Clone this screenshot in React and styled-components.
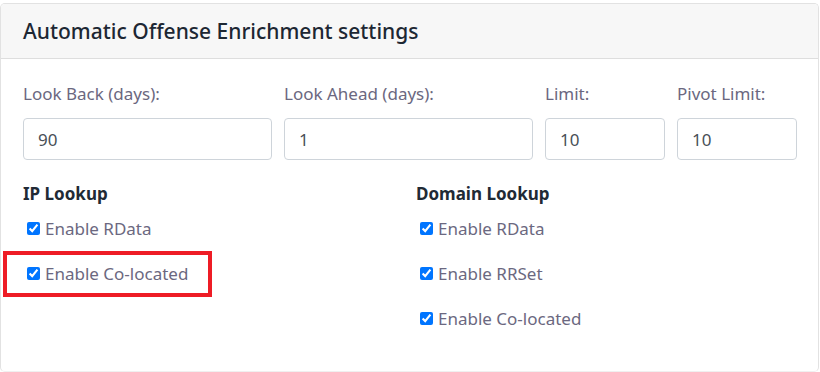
import React from "react";
import styled, { createGlobalStyle } from "styled-components";

const GlobalStyle = createGlobalStyle`
  body {
    margin: 0;
    background: #fff;
    font-family: "Noto Sans", "Open Sans", sans-serif;
  }
`;

const fields = [
  { label: "Look Back (days):", value: "90" },
  { label: "Look Ahead (days):", value: "1" },
  { label: "Limit:", value: "10" },
  { label: "Pivot Limit:", value: "10" },
];

const lookups = [
  { title: "IP Lookup", items: ["Enable RData", "Enable Co-located"], marked: 1 },
  { title: "Domain Lookup", items: ["Enable RData", "Enable RRSet", "Enable Co-located"] },
];

const App = () => {
  return (
    <>
      <GlobalStyle />
      <Card>
        <Header>Automatic Offense Enrichment settings</Header>
        <Body>
          <FieldRow>
            {fields.map(f => (
              <Field key={f.label}>
                <Label>{f.label}</Label>
                <Input type='text' defaultValue={f.value} />
              </Field>
            ))}
          </FieldRow>

          <LookupGrid>
            {lookups.map(group => (
              <div key={group.title}>
                <GroupTitle>{group.title}</GroupTitle>
                {group.items.map((item, i) => (
                  <CheckRow key={item} $marked={group.marked === i}>
                    <input type='checkbox' defaultChecked />
                    <span>{item}</span>
                  </CheckRow>
                ))}
              </div>
            ))}
          </LookupGrid>
        </Body>
      </Card>
    </>
  );
};

let Card = styled.div`
  box-sizing: border-box;
  margin-top: 3px;
  width: 819px;
  height: 369px;
  border: 1px solid #e2e2e2;
  border-bottom-color: #f0f0f0;
  border-radius: 5px;
  overflow: hidden;
`;

let Header = styled.div`
  height: 54px;
  display: flex;
  align-items: center;
  padding-left: 22px;
  background: #f7f7f7;
  border-bottom: 1px solid #dedede;
  font-size: 21px;
  font-weight: 500;
  color: #1d2733;
`;

let Body = styled.div`
  padding: 23px 22px 0 22px;
`;

let FieldRow = styled.div`
  display: grid;
  grid-template-columns: 249px 249px 120px 120px;
  column-gap: 12px;
`;

let Field = styled.div`
  display: flex;
  flex-direction: column;
`;

let Label = styled.label`
  font-size: 17px;
  line-height: 24px;
  color: #6b6880;
  margin-bottom: 12px;
`;

let Input = styled.input`
  box-sizing: border-box;
  height: 42px;
  padding: 0 14px;
  border: 1px solid #ced4da;
  border-radius: 4px;
  font-family: inherit;
  font-size: 17px;
  color: #495057;
  outline: none;
`;

let LookupGrid = styled.div`
  display: grid;
  grid-template-columns: 393px 393px;
  margin-top: 22px;
`;

let GroupTitle = styled.div`
  font-size: 17px;
  font-weight: 700;
  line-height: 24px;
  color: #212a35;
  margin-bottom: 11px;
`;

let CheckRow = styled.label`
  position: relative;
  display: flex;
  align-items: center;
  height: 45px;
  margin-top: -11px;
  margin-bottom: 11px;
  padding-left: 4px;
  font-size: 17px;
  color: #6b6880;

  input {
    width: 13px;
    height: 13px;
    margin: 0 5px 0 0;
  }

  &::after {
    content: "";
    display: ${p => (p.$marked ? "block" : "none")};
    position: absolute;
    left: -20px;
    top: 0;
    width: 201px;
    height: 38px;
    border: 4px solid #ee1c25;
    pointer-events: none;
  }
`;

export default App;
